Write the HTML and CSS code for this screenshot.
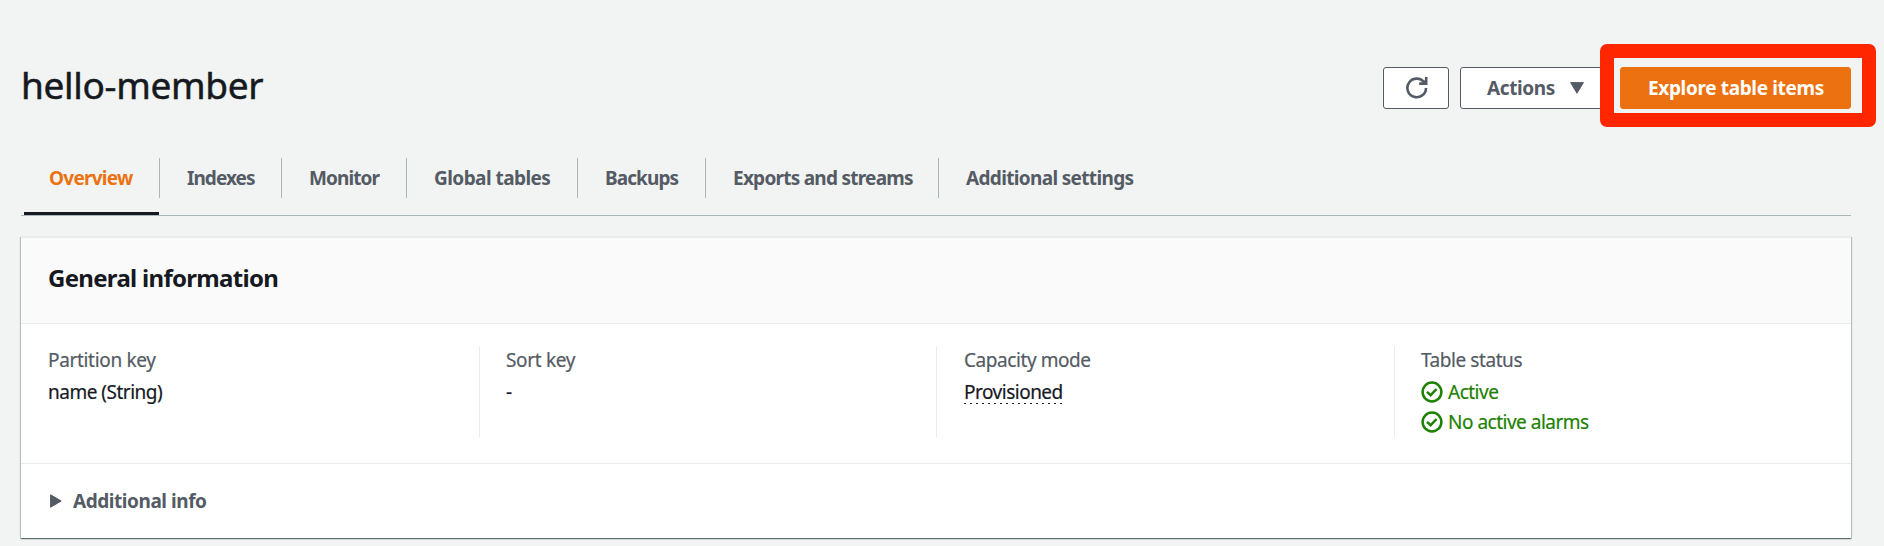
FILE: index.html
```html
<!DOCTYPE html>
<html lang="en">
<head>
<meta charset="utf-8">
<title>hello-member</title>
<link rel="stylesheet" href="styles.css">
</head>
<body>
<main class="page">
  <header class="page-header">
    <h1 class="title">hello-member</h1>
    <div class="actions">
      <button class="button refresh" aria-label="Refresh">
        <svg width="22" height="24" viewBox="0 0 22 24" fill="none" stroke="currentColor" stroke-width="2.6">
          <path d="M20 11.9A9.3 9.3 0 1 1 18.2 6.4"/>
          <path d="M20.2 1v6.6h-7"/>
          <path d="M15.5 7L19.5 3.6v3.4z" fill="currentColor" stroke="none"/>
        </svg>
      </button>
      <button class="button menu"><span class="menu-text">Actions</span>
        <svg width="14" height="12" viewBox="0 0 14 12"><path d="M.6.6h12.8L7 11.2z" fill="currentColor" stroke="currentColor" stroke-linejoin="round"/></svg>
      </button>
      <div class="primary-wrap">
        <button class="button primary">Explore table items</button>
        <span class="highlight"></span>
      </div>
    </div>
  </header>
  <nav class="tabs">
    <a class="tab active w1">Overview</a>
    <a class="tab w2">Indexes</a>
    <a class="tab w3">Monitor</a>
    <a class="tab w4">Global tables</a>
    <a class="tab w5">Backups</a>
    <a class="tab w6">Exports and streams</a>
    <a class="tab w7">Additional settings</a>
  </nav>
  <section class="card">
    <div class="card-header"><h2 class="card-title">General information</h2></div>
    <div class="columns">
      <div class="column"><div class="label key-label">Partition key</div><div class="value">name (String)</div></div>
      <div class="column tight"><div class="label key-label">Sort key</div><div class="value">-</div></div>
      <div class="column"><div class="label">Capacity mode</div><div class="value"><span class="dotted">Provisioned</span></div></div>
      <div class="column tight">
        <div class="label">Table status</div>
        <div class="value status"><svg width="22" height="22" viewBox="0 0 22 22" fill="none" stroke="currentColor" stroke-width="2.5"><circle cx="11" cy="11" r="9.4"/><path d="M6 10.8l3.6 3.4 6-6.2"/></svg><span>Active</span></div>
        <div class="value status"><svg width="22" height="22" viewBox="0 0 22 22" fill="none" stroke="currentColor" stroke-width="2.5"><circle cx="11" cy="11" r="9.4"/><path d="M6 10.8l3.6 3.4 6-6.2"/></svg><span>No active alarms</span></div>
      </div>
    </div>
    <div class="more">
      <svg width="12" height="14" viewBox="0 0 12 14"><path d="M.6 .8v12.4L11.2 7z" fill="currentColor" stroke="currentColor" stroke-linejoin="round"/></svg>
      <span>Additional info</span>
    </div>
  </section>
</main>
</body>
</html>
```
FILE: styles.css
```css
* { box-sizing: border-box; }
body { margin: 0; background: #f2f4f3; color: #16191f; font-family: "Noto Sans", "Open Sans", sans-serif; font-size: 19px; overflow: hidden; }
.page { height: 546px; padding: 0 33px 0 21px; }
.page-header { height: 158px; padding-top: 67px; display: flex; justify-content: space-between; align-items: flex-start; }
.title { margin: 0; font-size: 37px; font-weight: 400; line-height: 36px; letter-spacing: -.33px; -webkit-text-stroke: .5px #16191f; white-space: nowrap; }
.actions { display: flex; gap: 11px; }
.button { height: 42px; font: inherit; font-weight: 700; color: #545b64; background: #fff; border: 1px solid #545b64; border-radius: 3px; padding: 0; display: flex; align-items: center; white-space: nowrap; }
.refresh { width: 66px; padding-left: 22px; }
.menu { width: 149px; padding-left: 26px; letter-spacing: -.4px; }
.menu svg { margin-left: 15px; }
.primary-wrap { position: relative; width: 231px; }
.primary { width: 231px; background: #ec7211; border-color: #ec7211; color: #fff; padding-left: 27px; letter-spacing: -.35px; }
.highlight { position: absolute; left: -20px; top: -23px; width: 276px; height: 83px; border: 14px solid #ff2600; border-radius: 7px; }
.tabs { height: 58px; display: flex; border-bottom: 1px solid #aab7b8; padding-left: 3px; }
.tab { height: 40px; line-height: 40px; padding-left: 27px; border-right: 1px solid #aab7b8; color: #545b64; font-weight: 700; letter-spacing: -.75px; white-space: nowrap; }
.tab.active { position: relative; color: #ec7211; padding-left: 25px; }
.tab.active::after { content: ""; position: absolute; left: 0; bottom: -17px; width: 135px; height: 3px; background: #16191f; }
.w1 { width: 136px; }
.w2 { width: 122px; letter-spacing: -.95px; }
.w3 { width: 125px; letter-spacing: -.9px; }
.w4 { width: 171px; letter-spacing: -.55px; }
.w5 { width: 128px; letter-spacing: -.9px; }
.w6 { width: 233px; }
.tab.w7 { border-right: 0; letter-spacing: -.66px; }
.card { margin-top: 20px; height: 302px; background: #fff; border-top: 2px solid #eaeded; box-shadow: 0 1px 1px 0 rgba(0,28,36,.4), 1px 1px 1px 0 rgba(0,28,36,.2), -1px 1px 1px 0 rgba(0,28,36,.2); }
.card-header { height: 86px; background: #fafafa; border-bottom: 1px solid #eaeded; padding: 21px 0 0 27px; }
.card-title { margin: 0; font-size: 24px; font-weight: 700; line-height: 38px; letter-spacing: -.7px; }
.columns { height: 140px; padding: 22px 0 27px; display: grid; grid-template-columns: 459px 457px 458px 1fr; border-bottom: 1px solid #eaeded; -webkit-text-stroke: .2px currentColor; }
.column { padding: 0 0 0 27px; border-right: 1px solid #eaeded; }
.column.tight { padding-left: 26px; }
.column:last-child { border-right: 0; }
.label { color: #545b64; line-height: 28px; padding-bottom: 3px; letter-spacing: -.43px; }
.key-label { letter-spacing: -.33px; }
.value { line-height: 30px; height: 30px; letter-spacing: -.5px; }
.status { color: #1d8102; display: flex; align-items: center; gap: 5px; }
.dotted { display: inline-block; height: 27px; background: repeating-linear-gradient(90deg, #16191f 0 2px, transparent 2px 6px) bottom / 100% 1px no-repeat; }
.more { height: 73px; display: flex; align-items: center; padding-left: 29px; gap: 11px; color: #545b64; font-weight: 700; letter-spacing: -.45px; }
```
